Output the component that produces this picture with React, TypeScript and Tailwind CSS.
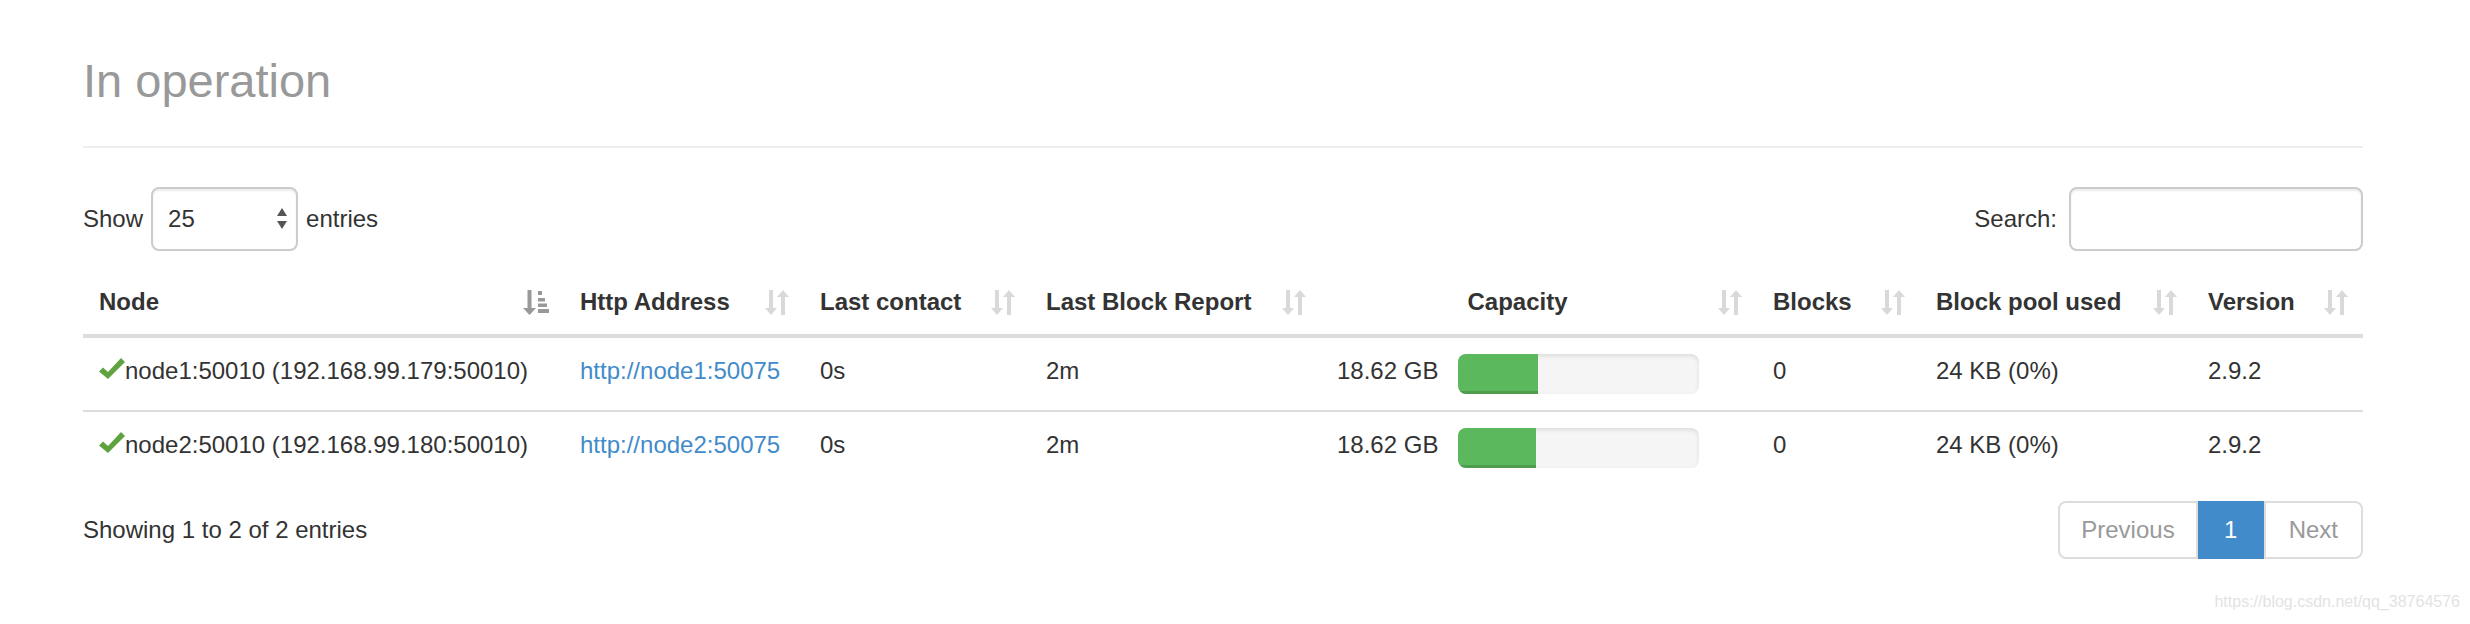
import React from "react";

type Node = {
  name: string;
  http: string;
  contact: string;
  report: string;
  capacity: string;
  used: number;
  blocks: string;
  pool: string;
  version: string;
};

const NODES: Node[] = [
  {
    name: "node1:50010 (192.168.99.179:50010)",
    http: "http://node1:50075",
    contact: "0s",
    report: "2m",
    capacity: "18.62 GB",
    used: 33.2,
    blocks: "0",
    pool: "24 KB (0%)",
    version: "2.9.2",
  },
  {
    name: "node2:50010 (192.168.99.180:50010)",
    http: "http://node2:50075",
    contact: "0s",
    report: "2m",
    capacity: "18.62 GB",
    used: 32.4,
    blocks: "0",
    pool: "24 KB (0%)",
    version: "2.9.2",
  },
];

function SortBoth() {
  return (
    <svg width="24" height="25" viewBox="0 0 24 25" className="shrink-0 fill-[#d9d9d9]">
      <rect x="4" y="0" width="4" height="19" />
      <polygon points="0,18 12,18 6,25" />
      <polygon points="12,7 24,7 18,0" />
      <rect x="16" y="6" width="4" height="19" />
    </svg>
  );
}

function SortAsc() {
  return (
    <svg width="26" height="25" viewBox="0 0 26 25" className="shrink-0 fill-[#999]">
      <rect x="4.5" y="0" width="4" height="19" />
      <polygon points="0,18 13,18 6.5,25" />
      <rect x="15" y="1" width="4" height="4" />
      <rect x="15" y="8" width="7" height="3.5" />
      <rect x="15" y="13.5" width="9" height="3.5" />
      <rect x="15" y="19" width="11" height="4" />
    </svg>
  );
}

function Check() {
  return (
    <svg width="26" height="21" viewBox="0 0 26 21" className="mb-[6px] shrink-0 fill-[#5fa341]">
      <polygon points="0,13.5 4,9.5 9,14 22,0 26,4 9,21" />
    </svg>
  );
}

function Th({ label, asc, center }: { label: string; asc?: boolean; center?: boolean }) {
  return (
    <th className="border-b-4 border-[#ddd] pb-[12px] pl-[16px] pr-[15px] pt-[20px] text-left align-bottom font-bold">
      <div className="flex items-center">
        <span className={center ? "mr-[20px] flex-1 text-center" : "flex-1"}>{label}</span>
        {asc ? <SortAsc /> : <SortBoth />}
      </div>
    </th>
  );
}

export default function App() {
  return (
    <div className="relative min-h-[624px] w-[2470px] bg-white font-['Liberation_Sans',Arial,sans-serif] text-[#333]">
      <div className="ml-[83px] w-[2280px] pt-[55px]">
        <div className="border-b-2 border-[#eee] pb-[39px]">
          <h1 className="text-[47px] font-normal leading-[52px] text-[#999]">In operation</h1>
        </div>

        <div className="mt-[38px] flex h-[66px] items-center justify-between text-[24px] leading-[40px]">
          <div className="flex items-center gap-[8px]">
            <span>Show</span>
            <div className="flex h-[64px] w-[147px] items-center justify-between rounded-[8px] border-2 border-[#ccc] pl-[15px] pr-[8px] shadow-[inset_0_2px_2px_rgba(0,0,0,0.075)]">
              <span>25</span>
              <svg width="12" height="22" viewBox="0 0 12 22" className="fill-[#555]">
                <polygon points="6,0 11,8 1,8" />
                <polygon points="1,13 11,13 6,21" />
              </svg>
            </div>
            <span>entries</span>
          </div>
          <div className="flex items-center gap-[12px]">
            <span>Search:</span>
            <input
              type="text"
              className="h-[64px] w-[294px] rounded-[8px] border-2 border-[#ccc] px-[16px] shadow-[inset_0_2px_2px_rgba(0,0,0,0.075)] outline-none"
            />
          </div>
        </div>

        <table className="mt-[10px] w-full table-fixed border-separate border-spacing-0 text-[24px] leading-[40px]">
          <colgroup>
            <col className="w-[481px]" />
            <col className="w-[240px]" />
            <col className="w-[226px]" />
            <col className="w-[291px]" />
            <col className="w-[436px]" />
            <col className="w-[163px]" />
            <col className="w-[272px]" />
            <col className="w-[171px]" />
          </colgroup>
          <thead>
            <tr>
              <Th label="Node" asc />
              <Th label="Http Address" />
              <Th label="Last contact" />
              <Th label="Last Block Report" />
              <Th label="Capacity" center />
              <Th label="Blocks" />
              <Th label="Block pool used" />
              <Th label="Version" />
            </tr>
          </thead>
          <tbody>
            {NODES.map((n, i) => {
              const td =
                i === 0
                  ? "px-[16px] pb-[19px] pt-[13px] align-middle"
                  : "border-t-2 border-[#ddd] px-[16px] pb-[19px] pt-[13px] align-middle";
              return (
                <tr key={n.name}>
                  <td className={td}>
                    <div className="flex items-center whitespace-nowrap">
                      <Check />
                      <span>{n.name}</span>
                    </div>
                  </td>
                  <td className={td}>
                    <a href="#" className="text-[#428bca]">{n.http}</a>
                  </td>
                  <td className={td}>{n.contact}</td>
                  <td className={td}>{n.report}</td>
                  <td className={td}>
                    <div className="flex translate-y-[3px] items-center gap-[20px]">
                      <span className="-translate-y-[3px] whitespace-nowrap">{n.capacity}</span>
                      <div className="h-[40px] w-[241px] overflow-hidden rounded-[8px] bg-[#f5f5f5] shadow-[inset_0_2px_4px_rgba(0,0,0,0.1)]">
                        <div
                          className="h-full bg-[#5cb85c] shadow-[inset_0_-3px_0_rgba(0,0,0,0.15)]"
                          style={{ width: `${n.used}%` }}
                        />
                      </div>
                    </div>
                  </td>
                  <td className={td}>{n.blocks}</td>
                  <td className={td}>{n.pool}</td>
                  <td className={td}>{n.version}</td>
                </tr>
              );
            })}
          </tbody>
        </table>

        <div className="mt-[17px] flex h-[58px] items-center justify-between text-[24px] leading-[34px]">
          <div>Showing 1 to 2 of 2 entries</div>
          <div className="flex h-[58px]">
            <span className="flex items-center rounded-l-[8px] border-2 border-[#ddd] px-[21px] text-[#999]">Previous</span>
            <span className="flex w-[66px] items-center justify-center bg-[#428bca] text-white">1</span>
            <span className="flex items-center rounded-r-[8px] border-2 border-[#ddd] px-[23px] text-[#999]">Next</span>
          </div>
        </div>
      </div>

      <div className="absolute bottom-[10px] right-[10px] text-[16px] text-[#e3e3e3]">https://blog.csdn.net/qq_38764576</div>
    </div>
  );
}
